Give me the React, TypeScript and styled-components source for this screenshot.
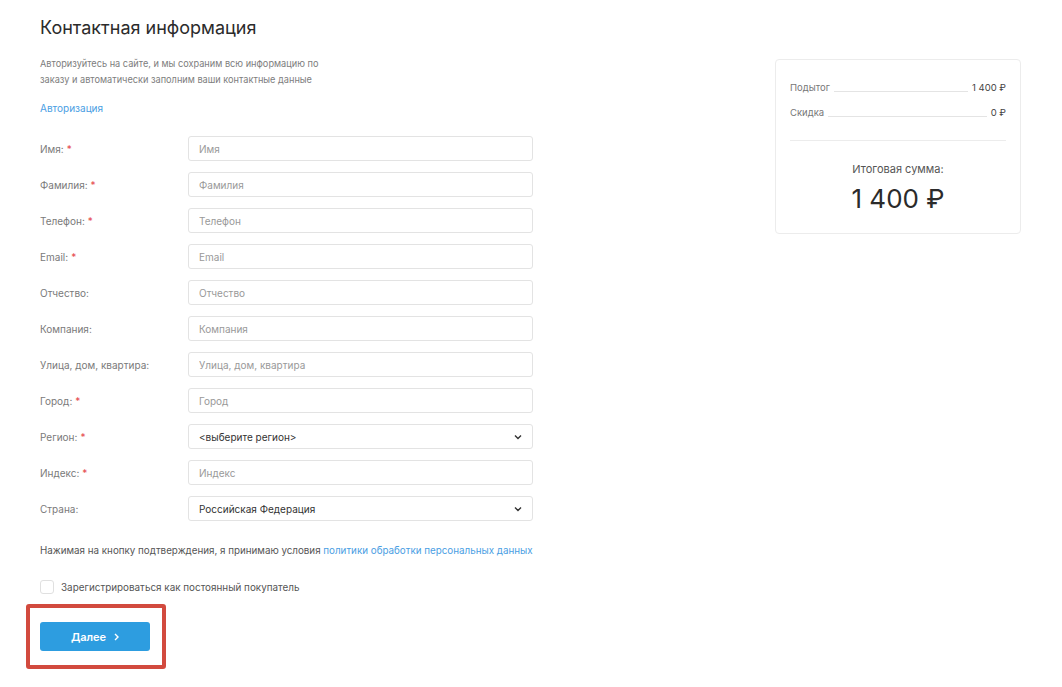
import React from "react";
import styled, { createGlobalStyle } from "styled-components";

const GlobalStyle = createGlobalStyle`
  html, body {
    margin: 0;
    padding: 0;
    background: #fff;
  }
  body {
    font-family: Inter, "Noto Sans", "Liberation Sans", sans-serif;
    color: #333;
  }
  * {
    box-sizing: border-box;
  }
`;

const Page = styled.div`
  display: flex;
  justify-content: space-between;
  align-items: flex-start;
  padding: 16px 41px 0 40px;
`;

const Main = styled.div`
  width: 493px;
  display: flex;
  flex-direction: column;
`;

const Title = styled.h1`
  margin: 0;
  font-size: 18px;
  line-height: 24px;
  font-weight: 400;
  color: #2b2b2b;
`;

const Hint = styled.p`
  margin: 16px 0 0;
  width: 290px;
  font-size: 9.2px;
  line-height: 16px;
  color: #7d7d7d;
`;

const AuthLink = styled.a`
  margin-top: 12px;
  font-size: 10px;
  line-height: 16px;
  color: #4a9ee3;
  text-decoration: none;
`;

const Fields = styled.div`
  margin-top: 20px;
  display: flex;
  flex-direction: column;
  gap: 11px;
`;

const Row = styled.div`
  display: grid;
  grid-template-columns: 148px 1fr;
  align-items: center;
  height: 25px;
`;

const Label = styled.label`
  font-size: 10px;
  color: #7a7a7a;
`;

const Star = styled.span`
  color: #e5484d;
  margin-left: 3px;
`;

const Input = styled.input`
  height: 25px;
  width: 100%;
  border: 1px solid #e3e3e3;
  border-radius: 3px;
  padding: 0 10px;
  font-family: inherit;
  font-size: 10px;
  color: #333;
  outline: none;
  &::placeholder {
    color: #999;
  }
`;

const SelectBox = styled.div`
  height: 25px;
  display: flex;
  align-items: center;
  justify-content: space-between;
  border: 1px solid #e3e3e3;
  border-radius: 3px;
  padding: 0 10px 0 10px;
  font-size: 10px;
  color: #333;
`;

const Consent = styled.p`
  margin: 22px 0 0;
  font-size: 9.8px;
  line-height: 16px;
  color: #555;
  white-space: nowrap;
`;

const PolicyLink = styled.a`
  color: #4a9ee3;
  text-decoration: none;
`;

const CheckRow = styled.label`
  margin-top: 20px;
  display: flex;
  align-items: center;
  gap: 7px;
  font-size: 9.9px;
  line-height: 16px;
  color: #555;
`;

const CheckBox = styled.span`
  width: 14px;
  height: 14px;
  border: 1px solid #e0e0e0;
  border-radius: 3px;
  background: #fff;
`;

const Highlight = styled.div`
  margin: 9px 0 0 -14px;
  align-self: flex-start;
  border: 4px solid #d24a3e;
  border-radius: 3px;
  padding: 14px 12px 14px 10px;
`;

const NextButton = styled.button`
  width: 110px;
  height: 29px;
  border: none;
  border-radius: 3px;
  background: #2d9de0;
  color: #fff;
  font-family: inherit;
  font-size: 11px;
  font-weight: 600;
  display: flex;
  align-items: center;
  justify-content: center;
  gap: 8px;
`;

const Summary = styled.div`
  width: 246px;
  margin-top: 43px;
  border: 1px solid #ececec;
  border-radius: 4px;
  padding: 20px 14px 18px;
`;

const SumLine = styled.div<{ $gap?: number }>`
  display: flex;
  align-items: flex-end;
  margin-top: ${({ $gap }) => $gap ?? 0}px;
  font-size: 9.5px;
  line-height: 16px;
  color: #777;
`;

const Leader = styled.span`
  flex: 1;
  height: 1px;
  background: #e4e4e4;
  margin: 0 4px 4px;
`;

const Amount = styled.span`
  color: #444;
`;

const Divider = styled.div`
  height: 1px;
  background: #ececec;
  margin-top: 19px;
`;

const TotalLabel = styled.div`
  margin-top: 20px;
  text-align: center;
  font-size: 11px;
  line-height: 16px;
  color: #555;
`;

const TotalValue = styled.div`
  margin-top: 6px;
  text-align: center;
  font-size: 26px;
  line-height: 32px;
  color: #2b2b2b;
`;

const Chevron = () => (
  <svg width="8" height="6" viewBox="0 0 8 6">
    <polyline points="1,1.5 4,4.5 7,1.5" fill="none" stroke="#333" strokeWidth="1.4" />
  </svg>
);

type Field = { label: string; required?: boolean; select?: string };

const fields: Field[] = [
  { label: "Имя", required: true },
  { label: "Фамилия", required: true },
  { label: "Телефон", required: true },
  { label: "Email", required: true },
  { label: "Отчество" },
  { label: "Компания" },
  { label: "Улица, дом, квартира" },
  { label: "Город", required: true },
  { label: "Регион", required: true, select: "<выберите регион>" },
  { label: "Индекс", required: true },
  { label: "Страна", select: "Российская Федерация" },
];

export default function App() {
  return (
    <>
      <GlobalStyle />
      <Page>
        <Main>
          <Title>Контактная информация</Title>
          <Hint>
            Авторизуйтесь на сайте, и мы сохраним всю информацию по заказу и автоматически заполним ваши
            контактные данные
          </Hint>
          <AuthLink href="#">Авторизация</AuthLink>
          <Fields>
            {fields.map((f) => (
              <Row key={f.label}>
                <Label>
                  {f.label}:{f.required && <Star>*</Star>}
                </Label>
                {f.select ? (
                  <SelectBox>
                    <span>{f.select}</span>
                    <Chevron />
                  </SelectBox>
                ) : (
                  <Input placeholder={f.label} />
                )}
              </Row>
            ))}
          </Fields>
          <Consent>
            Нажимая на кнопку подтверждения, я принимаю условия{" "}
            <PolicyLink href="#">политики обработки персональных данных</PolicyLink>
          </Consent>
          <CheckRow>
            <CheckBox />
            Зарегистрироваться как постоянный покупатель
          </CheckRow>
          <Highlight>
            <NextButton>
              Далее
              <svg width="5" height="8" viewBox="0 0 5 8">
                <polyline points="1,1 4,4 1,7" fill="none" stroke="#fff" strokeWidth="1.4" />
              </svg>
            </NextButton>
          </Highlight>
        </Main>
        <Summary>
          <SumLine>
            Подытог
            <Leader />
            <Amount>1 400 ₽</Amount>
          </SumLine>
          <SumLine $gap={9}>
            Скидка
            <Leader />
            <Amount>0 ₽</Amount>
          </SumLine>
          <Divider />
          <TotalLabel>Итоговая сумма:</TotalLabel>
          <TotalValue>1 400 ₽</TotalValue>
        </Summary>
      </Page>
    </>
  );
}
